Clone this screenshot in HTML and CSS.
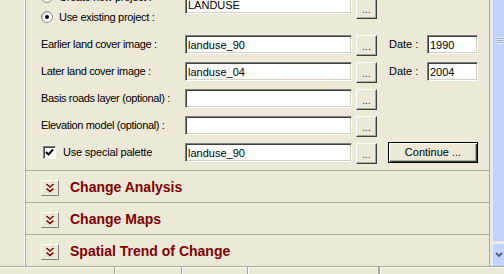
FILE: index.html
```html
<html>
<head>
  <title>Land Change Modeler</title>
  <link rel="stylesheet" href="styles.css">
</head>
<body>
  <div class="window">
    <div class="gutter"></div>
    <div class="panel">
      <div class="form">
        <div class="radios">
          <label class="radio-line"><span class="radio"></span>Create new project :</label>
          <label class="radio-line"><span class="radio checked"></span>Use existing project :</label>
        </div>
        <div class="field top-field">LANDUSE</div>
        <button class="browse top-browse">...</button>
        <div></div><div></div>

        <div class="label">Earlier land cover image :</div>
        <div class="field">landuse_90</div>
        <button class="browse">...</button>
        <div class="date-label">Date :</div>
        <div class="field">1990</div>

        <div class="label">Later land cover image :</div>
        <div class="field">landuse_04</div>
        <button class="browse">...</button>
        <div class="date-label">Date :</div>
        <div class="field">2004</div>

        <div class="label">Basis roads layer (optional) :</div>
        <div class="field"></div>
        <button class="browse">...</button>
        <div></div><div></div>

        <div class="label">Elevation model (optional) :</div>
        <div class="field"></div>
        <button class="browse">...</button>
        <div></div><div></div>

        <label class="check-line"><span class="checkbox">
          <svg width="9" height="9" viewBox="0 0 9 9"><path d="M1 4 L3.5 6.5 L8 1.5" fill="none" stroke="#000" stroke-width="2"/></svg>
        </span>Use special palette</label>
        <div class="field">landuse_90</div>
        <button class="browse">...</button>
        <button class="continue">Continue ...</button>
      </div>

      <div class="section">
        <span class="expander">
          <svg width="10" height="10" viewBox="0 0 10 10"><path d="M1.5 1 L5 4 L8.5 1 M1.5 5.5 L5 8.5 L8.5 5.5" fill="none" stroke="#800000" stroke-width="1.6"/></svg>
        </span>
        <span class="section-title">Change Analysis</span>
      </div>
      <div class="section">
        <span class="expander">
          <svg width="10" height="10" viewBox="0 0 10 10"><path d="M1.5 1 L5 4 L8.5 1 M1.5 5.5 L5 8.5 L8.5 5.5" fill="none" stroke="#800000" stroke-width="1.6"/></svg>
        </span>
        <span class="section-title">Change Maps</span>
      </div>
      <div class="section">
        <span class="expander">
          <svg width="10" height="10" viewBox="0 0 10 10"><path d="M1.5 1 L5 4 L8.5 1 M1.5 5.5 L5 8.5 L8.5 5.5" fill="none" stroke="#800000" stroke-width="1.6"/></svg>
        </span>
        <span class="section-title">Spatial Trend of Change</span>
      </div>
    </div>
    <div class="scrollbar">
      <div class="thumb"><span class="grip"></span></div>
      <div class="arrow">
        <svg width="8" height="6" viewBox="0 0 8 6"><path d="M1 1 L4 4 L7 1" fill="none" stroke="#4d6185" stroke-width="1.8"/></svg>
      </div>
    </div>
  </div>
  <div class="statusbar">
    <div class="cell" style="width: 114px"></div>
    <div class="cell" style="width: 66px"></div>
    <div class="cell" style="width: 65px"></div>
    <div class="cell" style="width: 130px"></div>
    <div class="cell"></div>
  </div>
</body>
</html>
```

FILE: styles.css
```css
body {
  margin: 0;
  background: #ece9d8;
  font-family: 'Liberation Sans', Arial, sans-serif;
  font-size: 11px;
  color: #000;
  overflow: hidden;
}
.window {
  display: flex;
  height: 266px;
}
.gutter {
  width: 24px;
  border-right: 1px solid #fff;
}
.panel {
  width: 463px;
  border-left: 1px solid #aca899;
  border-right: 1px solid #aca899;
  overflow: hidden;
}
.form {
  display: grid;
  grid-template-columns: 144px 167px 25px 50px 51px;
  grid-template-rows: 40px repeat(5, 20px);
  row-gap: 7px;
  margin-top: -13px;
  padding-left: 15px;
  padding-bottom: 8px;
  align-items: center;
}
.radios {
  display: flex;
  flex-direction: column;
}
.radio-line {
  display: flex;
  align-items: center;
  height: 20px;
  letter-spacing: -0.3px;
}
.radio {
  width: 10px;
  height: 10px;
  border-radius: 50%;
  border: 1px solid #8d8b82;
  background: #fff;
  margin-right: 6px;
  position: relative;
  box-shadow: inset 1px 1px 1px #c9c6b8;
}
.radio.checked::after {
  content: "";
  position: absolute;
  left: 3px;
  top: 3px;
  width: 4px;
  height: 4px;
  border-radius: 50%;
  background: #000;
}
.label {
  letter-spacing: -0.35px;
}
.field {
  height: 16px;
  line-height: 16px;
  padding-left: 2px;
  background: #fff;
  border-top: 1px solid #808080;
  border-left: 1px solid #808080;
  border-bottom: 1px solid #fff;
  border-right: 1px solid #fff;
  box-shadow: inset 1px 1px 0 #404040, inset -1px -1px 0 #d4d0c8;
  padding-top: 1px;
}
.top-field {
  align-self: start;
  margin-top: 8px;
}
.browse {
  justify-self: end;
  width: 21px;
  height: 21px;
  margin-top: 2px;
  padding: 0;
  font-family: inherit;
  font-size: 10px;
  line-height: 22px;
  color: #333;
  background: #ece9d8;
  border-top: 1px solid #fff;
  border-left: 1px solid #fff;
  border-bottom: 1px solid #404040;
  border-right: 1px solid #404040;
  box-shadow: inset -1px -1px 0 #aca899;
}
.top-browse {
  align-self: start;
  margin-top: 11px;
}
.date-label {
  padding-left: 12px;
}
.check-line {
  display: flex;
  align-items: center;
  letter-spacing: -0.2px;
}
.checkbox {
  width: 11px;
  height: 11px;
  margin: 0 7px 0 2px;
  background: #fff;
  border-top: 1px solid #808080;
  border-left: 1px solid #808080;
  border-bottom: 1px solid #fff;
  border-right: 1px solid #fff;
  box-shadow: inset 1px 1px 0 #404040;
  display: flex;
  align-items: center;
  justify-content: center;
}
.continue {
  grid-column: 4 / span 2;
  margin-left: 11px;
  height: 21px;
  padding: 0;
  font-family: inherit;
  font-size: 11px;
  background: #ece9d8;
  border: 1px solid #000;
  box-shadow: inset 1px 1px 0 #fff, inset -1px -1px 0 #404040, inset -2px -2px 0 #aca899;
}
.section {
  height: 31px;
  border-top: 1px solid #aca899;
  display: flex;
  align-items: center;
  padding-left: 15px;
}
.expander {
  width: 16px;
  height: 14px;
  display: flex;
  align-items: center;
  justify-content: center;
  margin-top: 2px;
  margin-right: 11px;
  background: #ece9d8;
  border-top: 1px solid #fff;
  border-left: 1px solid #fff;
  border-bottom: 1px solid #808080;
  border-right: 1px solid #808080;
}
.section-title {
  font-size: 14px;
  font-weight: bold;
  color: #800000;
  margin-top: 1px;
}
.scrollbar {
  width: 12px;
  margin-left: 2px;
  display: flex;
  flex-direction: column;
}
.thumb {
  flex: 1;
  background: #c1d3fb;
  border-left: 1px solid #dfe8fe;
  position: relative;
}
.grip {
  position: absolute;
  left: 4px;
  top: 37px;
  width: 6px;
  height: 7px;
  background: repeating-linear-gradient(#eef3fe 0 1px, #8faaf0 1px 2px);
}
.arrow {
  height: 22px;
  margin-top: 2px;
  background: #c1d3fb;
  border-top: 1px solid #eef3fe;
  border-left: 1px solid #dfe8fe;
  display: flex;
  align-items: center;
  justify-content: center;
}
.statusbar {
  display: flex;
  height: 8px;
  border-top: 1px solid #aca899;
  box-shadow: inset 0 1px 0 #fff;
}
.cell {
  border-right: 1px solid #aca899;
  box-shadow: 1px 0 0 #fff;
}
```
